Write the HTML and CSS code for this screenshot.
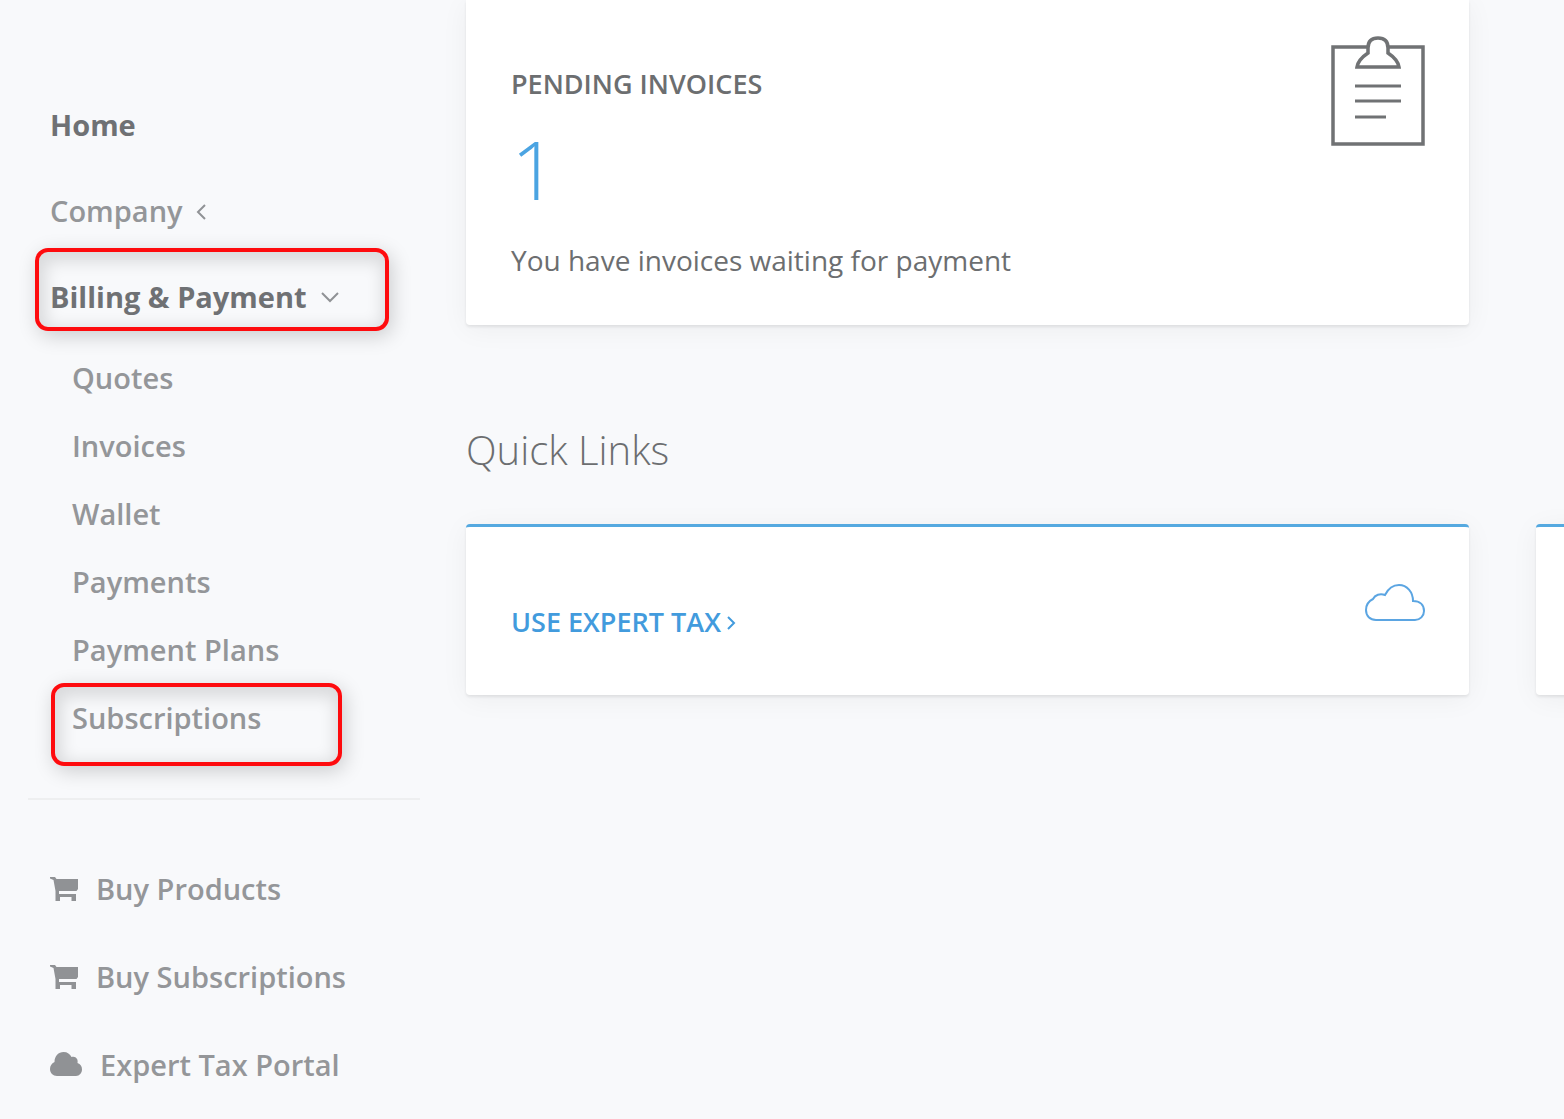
FILE: index.html
```html
<!DOCTYPE html>
<html lang="en">
<head>
<meta charset="utf-8">
<meta name="viewport" content="width=device-width, initial-scale=1">
<title>Home</title>
<link rel="stylesheet" href="styles.css">
</head>
<body>
<div class="layout">
  <aside class="sidebar">
    <nav aria-label="Account">
      <ul class="menu">
        <li><a class="menu-link active" href="#">Home</a></li>
        <li><a class="menu-link" href="#">Company
          <svg class="chevron" width="20" height="20" viewBox="0 0 20 20" aria-hidden="true"><path d="M10 5L3 12L10 19"/></svg></a></li>
        <li>
          <a class="menu-link active marked" href="#">Billing &amp; Payment
            <svg class="chevron" width="20" height="20" viewBox="0 0 20 20" aria-hidden="true"><path d="M3 7L11 15L19 7"/></svg></a>
          <ul class="submenu">
            <li><a class="submenu-link" href="#">Quotes</a></li>
            <li><a class="submenu-link" href="#">Invoices</a></li>
            <li><a class="submenu-link" href="#">Wallet</a></li>
            <li><a class="submenu-link" href="#">Payments</a></li>
            <li><a class="submenu-link" href="#">Payment Plans</a></li>
            <li><a class="submenu-link marked" href="#">Subscriptions</a></li>
          </ul>
        </li>
      </ul>
      <hr class="divider">
      <ul class="shortcuts">
        <li><a class="shortcut" href="#">
          <svg class="glyph" width="28" height="28" viewBox="0 -2 28 28" aria-hidden="true"><path d="M0 1H5L6.500 3H28V13L26.500 15H9V18H26V25H21.500V21H10V25H5.500V15L3.500 4L0 2.500Z"/></svg>Buy Products</a></li>
        <li><a class="shortcut" href="#">
          <svg class="glyph" width="28" height="28" viewBox="0 -2 28 28" aria-hidden="true"><path d="M0 1H5L6.500 3H28V13L26.500 15H9V18H26V25H21.500V21H10V25H5.500V15L3.500 4L0 2.500Z"/></svg>Buy Subscriptions</a></li>
        <li><a class="shortcut" href="#">
          <svg class="glyph" width="32" height="26" viewBox="0 0 32 26" aria-hidden="true"><path d="M7 25C3 25 0 22 0 18C0 15 1.500 12.500 4.500 11C4.500 5 8.500 1 13.500 1C17.500 1 20 3 21.500 6C25.500 4.500 28.500 8 27.500 12C30.500 13 32 15.500 32 18.500C32 22 29.500 25 26 25Z"/></svg>Expert Tax Portal</a></li>
      </ul>
    </nav>
  </aside>
  <main class="content">
    <section class="card-row">
      <article class="card summary">
        <div>
          <h2 class="card-title">PENDING INVOICES</h2>
          <p class="count">1</p>
          <p class="note">You have invoices waiting for payment</p>
        </div>
        <svg class="line-icon" width="94" height="112" viewBox="0 0 94 112" aria-hidden="true"><path stroke-width="3.500" d="M36 11H2V108H92V11H58"/><path stroke-width="3.500" d="M26 31H68C67 25 63 21 57 17V12C57 5 53 2 47 2S37 5 37 12V17C31 21 27 25 26 31Z"/><path stroke-width="3" d="M24 50H70M24 65H70M24 81H55"/></svg>
      </article>
    </section>
    <h1 class="heading">Quick Links</h1>
    <section class="card-row">
      <article class="card quick">
        <a class="quick-link" href="#">USE EXPERT TAX<svg width="14" height="18" viewBox="0 0 14 18" aria-hidden="true"><path d="M3 4L9 10L3 16"/></svg></a>
        <svg class="line-icon blue" width="60" height="38" viewBox="0 0 60 38" aria-hidden="true"><path stroke-width="2" d="M11 36C5 36 1 32 1 26C1 20 4 17 8 15C10 11 15 9 20 11C23 5 27 1 34 1C42 1 48 8 48 17C55 17 59 21 59 27C59 32 55 36 50 36Z"/></svg>
      </article>
      <article class="card quick"></article>
    </section>
  </main>
</div>
</body>
</html>
```
FILE: styles.css
```css
*,
*::before {
  box-sizing: border-box;
}

body {
  margin: 0;
  background: #f8f9fb;
  color: #6c6e70;
  font-family: "Open Sans", sans-serif;
}

h1, h2, p, ul {
  margin: 0;
  padding: 0;
}

ul {
  list-style: none;
}

a {
  color: inherit;
  text-decoration: none;
}

svg {
  flex: none;
}

.layout {
  display: grid;
  grid-template-columns: 420px minmax(0, 1fr);
  column-gap: 46px;
  overflow: hidden;
}

.sidebar {
  padding: 81px 0 8px 28px;
  color: #949699;
  font-size: 29px;
  font-weight: 600;
}

.menu-link,
.submenu-link,
.shortcut {
  display: flex;
  align-items: center;
  position: relative;
  isolation: isolate;
  padding-left: 22px;
}

.menu-link {
  gap: 12px;
  height: 86px;
}

.active {
  color: #6f7174;
  font-weight: 700;
}

.chevron {
  fill: none;
  stroke: #909295;
  stroke-width: 2;
}

.submenu {
  padding: 4px 0 47px;
}

.submenu-link {
  height: 68px;
  padding-left: 44px;
}

.marked::before {
  content: "";
  position: absolute;
  z-index: -1;
  top: -5px;
  left: 7px;
  right: 31px;
  height: 83px;
  border: 4px solid #fe0b0e;
  border-radius: 13px;
  box-shadow: 3px 5px 20px rgba(0, 0, 0, .18), inset 2px 5px 16px 5px rgba(0, 0, 0, .12);
}

.submenu-link.marked::before {
  top: 0;
  left: 23px;
  right: 78px;
}

.divider {
  height: 2px;
  margin: 0;
  border: 0;
  background: #eeeff0;
}

.shortcuts {
  padding-top: 44px;
}

.shortcut {
  gap: 18px;
  height: 88px;
}

.glyph {
  fill: #909295;
}

.card-row {
  display: grid;
  grid-auto-flow: column;
  grid-auto-columns: calc(100% - 95px);
  column-gap: 67px;
}

.card {
  display: flex;
  justify-content: space-between;
  align-items: flex-start;
  background: #fff;
  border-radius: 4px;
  box-shadow: 0 2px 3px rgba(0, 0, 0, .08), 0 4px 28px rgba(0, 0, 0, .05);
}

.summary {
  padding: 36px 44px 45px 45px;
  border-radius: 0 0 4px 4px;
}

.card-title {
  padding-top: 28px;
  font-size: 27px;
  font-weight: 600;
  line-height: 40px;
}

.count {
  color: #4ba4e2;
  font-size: 82px;
  font-weight: 300;
  line-height: 128px;
}

.note {
  padding-top: 8px;
  font-size: 28px;
  line-height: 40px;
}

.line-icon {
  fill: none;
  stroke: #707274;
}

.blue {
  stroke: #5ba5e2;
}

.heading {
  padding: 95px 0 44px;
  font-size: 40px;
  font-weight: 300;
  line-height: 60px;
}

.quick {
  min-height: 171px;
  padding: 57px 44px 50px 45px;
  border-top: 3px solid #55a9e0;
}

.quick-link {
  display: flex;
  align-items: center;
  gap: 4px;
  padding-top: 18px;
  color: #429bdd;
  font-size: 27px;
  font-weight: 600;
  line-height: 40px;
}

.quick-link svg {
  fill: none;
  stroke: currentColor;
  stroke-width: 2;
}
```
